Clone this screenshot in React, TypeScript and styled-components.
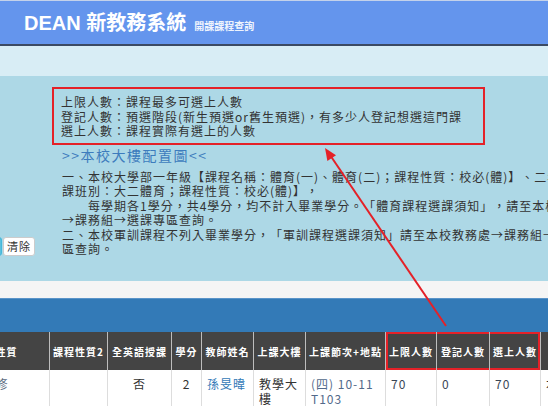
import React from 'react'
import styled, { createGlobalStyle, css } from 'styled-components'

const GlobalStyle = createGlobalStyle`
  *, *::before, *::after {
    box-sizing: border-box;
  }

  html,
  body {
    margin: 0;
    padding: 0;
    overflow: hidden;
  }

  body {
    font-family: 'Noto Sans CJK TC', 'Liberation Sans', sans-serif;
    color: #333333;
    background: #ffffff;
    text-spacing-trim: space-all;
  }
`

type Align = 'left' | 'center'
type Mark = 'none' | 'start' | 'mid' | 'end'

interface Column {
  label: string
  width: number
  align: Align
  mark: Mark
}

const columns: Column[] = [
  { label: '課程性質', width: 108, align: 'center', mark: 'none' },
  { label: '課程性質2', width: 58, align: 'center', mark: 'none' },
  { label: '全英語授課', width: 64, align: 'center', mark: 'none' },
  { label: '學分', width: 30, align: 'center', mark: 'none' },
  { label: '教師姓名', width: 52, align: 'left', mark: 'none' },
  { label: '上課大樓', width: 52, align: 'left', mark: 'none' },
  { label: '上課節次+地點', width: 80, align: 'left', mark: 'none' },
  { label: '上限人數', width: 51, align: 'left', mark: 'start' },
  { label: '登記人數', width: 53, align: 'left', mark: 'mid' },
  { label: '選上人數', width: 51, align: 'left', mark: 'end' },
  { label: '備註', width: 60, align: 'left', mark: 'none' }
]

const notes = [
  '一、本校大學部一年級【課程名稱：體育(一)、體育(二)；課程性質：校必(體)】、二年級【開',
  '課班別：大二體育；課程性質：校必(體)】，',
  '\u3000\u3000每學期各1學分，共4學分，均不計入畢業學分。「體育課程選課須知」，請至本校教務處',
  '→課務組→選課專區查詢。',
  '二、本校軍訓課程不列入畢業學分，「軍訓課程選課須知」請至本校教務處→課務組→選課專',
  '區查詢。'
]

const Page = styled.div`
  position: relative;
  width: 548px;
  height: 406px;
  overflow: hidden;
`

const Banner = styled.header`
  display: flex;
  align-items: center;
  height: 46px;
  padding: 4px 24px 0;
  background: #6495ed;
  border-top: 1px solid #c4d2ea;
  border-bottom: 2px solid #3b4a63;
`

const Brand = styled.h1`
  display: flex;
  align-items: baseline;
  gap: 8px;
  margin: 0;
  color: #ffffff;
  font-family: 'Liberation Sans', 'Noto Sans CJK TC', sans-serif;
  font-size: 20px;
  font-weight: 700;
  line-height: 24px;
`

const BrandSub = styled.span`
  font-family: 'Noto Sans CJK TC', sans-serif;
  font-size: 10px;
  font-weight: 700;
  color: #eef3fd;
`

const SubNav = styled.div`
  height: 30px;
  background: #d8edf5;
`

const Info = styled.section`
  display: grid;
  grid-template-columns: 52px minmax(0, 1fr);
  height: 205px;
  padding-top: 11px;
  background: #add8e6;
`

const ButtonRow = styled.div`
  display: flex;
  gap: 1px;
  align-self: end;
  margin: 0 0 25px -30px;
`

const Button = styled.button<{ $variant: 'info' | 'plain' }>`
  width: 32px;
  height: 19px;
  padding: 0;
  border-radius: 3px;
  font-family: 'Noto Sans CJK TC', sans-serif;
  font-size: 11px;
  letter-spacing: 1px;
  line-height: 17px;
  ${p =>
    p.$variant === 'info'
      ? css`
          background: #5bc0de;
          border: 1px solid #46b8da;
          color: #ffffff;
        `
      : css`
          background: #ffffff;
          border: 1px solid #cccccc;
          color: #333333;
        `}
`

const Content = styled.div`
  min-width: 0;
`

const NoteBox = styled.div`
  width: 433px;
  padding: 6px 7px 4px;
  border: 2px solid #e42128;
  font-size: 12px;
  letter-spacing: 1px;
  line-height: 14.5px;
  color: #333333;
`

const MapLink = styled.a`
  display: block;
  margin-left: 10px;
  font-size: 14px;
  letter-spacing: 1.5px;
  line-height: 20px;
  color: #3d7cbd;
  text-decoration: none;
`

const Notes = styled.div`
  margin: 5px 0 0 10px;
  font-size: 12px;
  letter-spacing: 1px;
  line-height: 14.5px;
  color: #333333;
`

const NoteLine = styled.div`
  white-space: nowrap;
`

const Spacer = styled.div`
  height: 17px;
  background: #f5f5f5;
`

const ResultBar = styled.div`
  height: 34px;
  background: #337ab7;
  border-top: 1px solid #5a94c9;
`

const Grid = styled.div`
  display: grid;
  grid-template-columns: ${columns.map(c => `${c.width}px`).join(' ')};
  margin-left: -58px;
`

const markShadow = (mark: Mark) => {
  const red = '#e42128'
  switch (mark) {
    case 'start':
      return `inset 2px 0 0 ${red}, inset 0 2px 0 ${red}, inset 0 -2px 0 ${red}`
    case 'mid':
      return `inset 0 2px 0 ${red}, inset 0 -2px 0 ${red}`
    case 'end':
      return `inset -2px 0 0 ${red}, inset 0 2px 0 ${red}, inset 0 -2px 0 ${red}`
    default:
      return 'none'
  }
}

const HeadCell = styled.div<{ $mark: Mark }>`
  display: flex;
  align-items: center;
  justify-content: center;
  height: 38px;
  background: #444444;
  border-right: 1px solid #bdbdbd;
  color: #ffffff;
  font-size: 10px;
  font-weight: 700;
  letter-spacing: 1px;
  white-space: nowrap;
  box-shadow: ${p => markShadow(p.$mark)};
`

const Cell = styled.div<{ $align: Align; $tone?: string }>`
  min-height: 36px;
  padding: 6px 5px;
  border-right: 1px solid #dddddd;
  background: #ffffff;
  font-size: 12px;
  letter-spacing: 1px;
  line-height: 15px;
  text-align: ${p => p.$align};
  color: ${p => p.$tone ?? '#333333'};
`

const TeacherLink = styled.a`
  color: #337ab7;
  text-decoration: none;
`

const Overlay = styled.svg`
  position: absolute;
  top: 0;
  left: 0;
  pointer-events: none;
`

const cells: React.ReactNode[] = [
  '必修',
  '',
  '否',
  '2',
  <TeacherLink href="#">孫旻暐</TeacherLink>,
  '教學大樓',
  <>
    (四) 10-11
    <br />
    T103
  </>,
  '70',
  '0',
  '70',
  '本'
]

const tones: (string | undefined)[] = [
  '#5b6b80',
  undefined,
  '#333333',
  '#333333',
  undefined,
  '#333333',
  '#52698a',
  '#3a4656',
  '#3a4656',
  '#3a4656',
  '#333333'
]

const App: React.FC = () => (
  <Page>
    <GlobalStyle />
    <Banner>
      <Brand>
        DEAN 新教務系統
        <BrandSub>開課課程查詢</BrandSub>
      </Brand>
    </Banner>
    <SubNav />
    <Info>
      <ButtonRow>
        <Button $variant="info">查詢</Button>
        <Button $variant="plain">清除</Button>
      </ButtonRow>
      <Content>
        <NoteBox>
          <div>上限人數：課程最多可選上人數</div>
          <div>登記人數：預選階段(新生預選or舊生預選)，有多少人登記想選這門課</div>
          <div>選上人數：課程實際有選上的人數</div>
        </NoteBox>
        <MapLink href="#">&gt;&gt;本校大樓配置圖&lt;&lt;</MapLink>
        <Notes>
          {notes.map((line, i) => (
            <NoteLine key={i}>{line}</NoteLine>
          ))}
        </Notes>
      </Content>
    </Info>
    <Spacer />
    <ResultBar />
    <Grid>
      {columns.map(c => (
        <HeadCell key={c.label} $mark={c.mark}>
          {c.label}
        </HeadCell>
      ))}
      {columns.map((c, i) => (
        <Cell key={c.label} $align={c.align} $tone={tones[i]}>
          {cells[i]}
        </Cell>
      ))}
    </Grid>
    <Overlay width="548" height="406" viewBox="0 0 548 406">
      <line x1="446" y1="326" x2="330" y2="155" stroke="#e42128" strokeWidth="2" />
      <polygon points="325,148 327.4,161 336,155.2" fill="#e42128" />
    </Overlay>
  </Page>
)

export default App
